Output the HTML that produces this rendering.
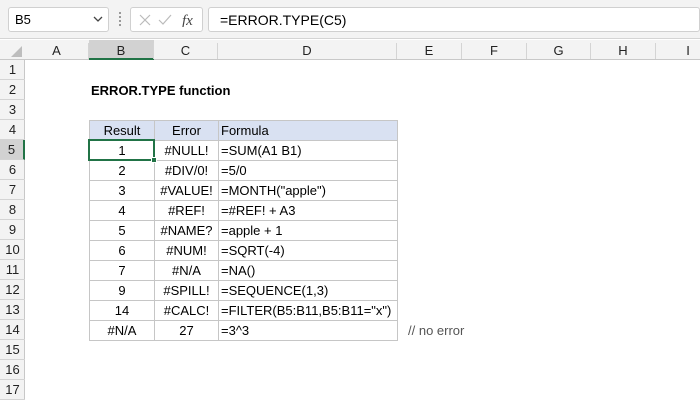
<!DOCTYPE html><html><head><style>
body{margin:0;width:700px;height:400px;background:#fff;font-family:"Liberation Sans",sans-serif;position:relative;overflow:hidden}
.a{position:absolute;box-sizing:border-box}
.t{font-size:13px;color:#000}
</style></head><body>
<div class="a" style="left:0;top:0;width:700px;height:39px;background:#f3f3f3;border-bottom:1px solid #d4d4d4"></div>
<div class="a" style="left:8px;top:7px;width:101px;height:25px;background:#fff;border:1px solid #d0d0d0;border-radius:3px"></div>
<div class="a t" style="left:15px;top:12px">B5</div>
<svg class="a" style="left:93px;top:15px" width="10" height="8"><path d="M1 2l4 4 4-4" stroke="#444" fill="none" stroke-width="1.3"/></svg>
<div class="a" style="left:119px;top:12px;width:2px;height:14px;border-left:2px dotted #999"></div>
<div class="a" style="left:130px;top:7px;width:73px;height:25px;background:#fff;border:1px solid #d0d0d0;border-radius:3px"></div>
<svg class="a" style="left:138px;top:13px" width="60" height="14"><path d="M2 2l10 10M12 2L2 12" stroke="#bbb" stroke-width="1.2"/><path d="M21 7l4 4 8-9" stroke="#bbb" fill="none" stroke-width="1.2"/><text x="44" y="12" font-family="Liberation Serif" font-style="italic" font-size="15" fill="#444">fx</text></svg>
<div class="a" style="left:208px;top:7px;width:492px;height:25px;background:#fff;border:1px solid #d0d0d0;border-radius:3px"></div>
<div class="a t" style="left:220px;top:12px;font-size:14px">=ERROR.TYPE(C5)</div>
<div class="a" style="left:0;top:40px;width:700px;height:20px;background:#f3f3f3;border-bottom:1px solid #c8c8c8"></div>
<div class="a" style="left:0;top:60px;width:25px;height:340px;background:#f3f3f3;border-right:1px solid #c8c8c8"></div>
<div class="a" style="left:89px;top:40px;width:65px;height:20px;background:#d2d2d2;border-bottom:2px solid #217346"></div>
<svg class="a" style="left:9px;top:44px" width="14" height="14"><path d="M13 2L13 13 2 13Z" fill="#bdbdbd"/></svg>
<div id="g"></div>
<script>
var cols=[25,89,154,218,397,462,527,591,656,721],names="ABCDEFGHI",h="";
for(var i=0;i<9;i++){h+='<div class="a t" style="left:'+cols[i]+'px;top:43px;width:'+(cols[i+1]-cols[i])+'px;text-align:center;border-right:1px solid #d4d4d4;height:16px;color:#222">'+names[i]+'</div>';}
for(var r=1;r<=17;r++){var y=60+(r-1)*20;h+='<div class="a t" style="left:0;top:'+y+'px;width:25px;height:20px;line-height:20px;text-align:center;border-bottom:1px solid #d4d4d4;color:#222;'+(r==5?'background:#d2d2d2;border-right:2px solid #217346':'')+'">'+r+'</div>';}
var d=[["1","#NULL!","=SUM(A1 B1)"],["2","#DIV/0!","=5/0"],["3","#VALUE!","=MONTH(\"apple\")"],["4","#REF!","=#REF! + A3"],["5","#NAME?","=apple + 1"],["6","#NUM!","=SQRT(-4)"],["7","#N/A","=NA()"],["9","#SPILL!","=SEQUENCE(1,3)"],["14","#CALC!","=FILTER(B5:B11,B5:B11=\"x\")"],["#N/A","27","=3^3"]];
h+='<div class="a" style="left:89px;top:120px;width:308px;height:20px;background:#d9e1f2"></div>';
var hd=["Result","Error","Formula"];
for(var r=0;r<11;r++){var y=120+r*20;var row=r==0?hd:d[r-1];
for(var c=0;c<3;c++){var x=cols[c+1],w=cols[c+2]-x;h+='<div class="a t" style="left:'+x+'px;top:'+y+'px;width:'+(w+1)+'px;height:21px;border:1px solid #c6c6c6;line-height:19px;font-size:13px;white-space:nowrap;'+(c==2?'padding-left:2px':'text-align:center')+'">'+row[c].replace(/</g,'&lt;')+'</div>';}}
document.getElementById('g').innerHTML=h;
</script>
<div class="a t" style="left:91px;top:83px;font-weight:bold">ERROR.TYPE function</div>
<div class="a" style="left:88px;top:139px;width:67px;height:22px;border:2px solid #217346"></div>
<div class="a" style="left:151px;top:157px;width:6px;height:6px;background:#217346;border:1px solid #fff"></div>
<div class="a t" style="left:408px;top:323px;color:#555;font-size:13px">// no error</div>
</body></html>
